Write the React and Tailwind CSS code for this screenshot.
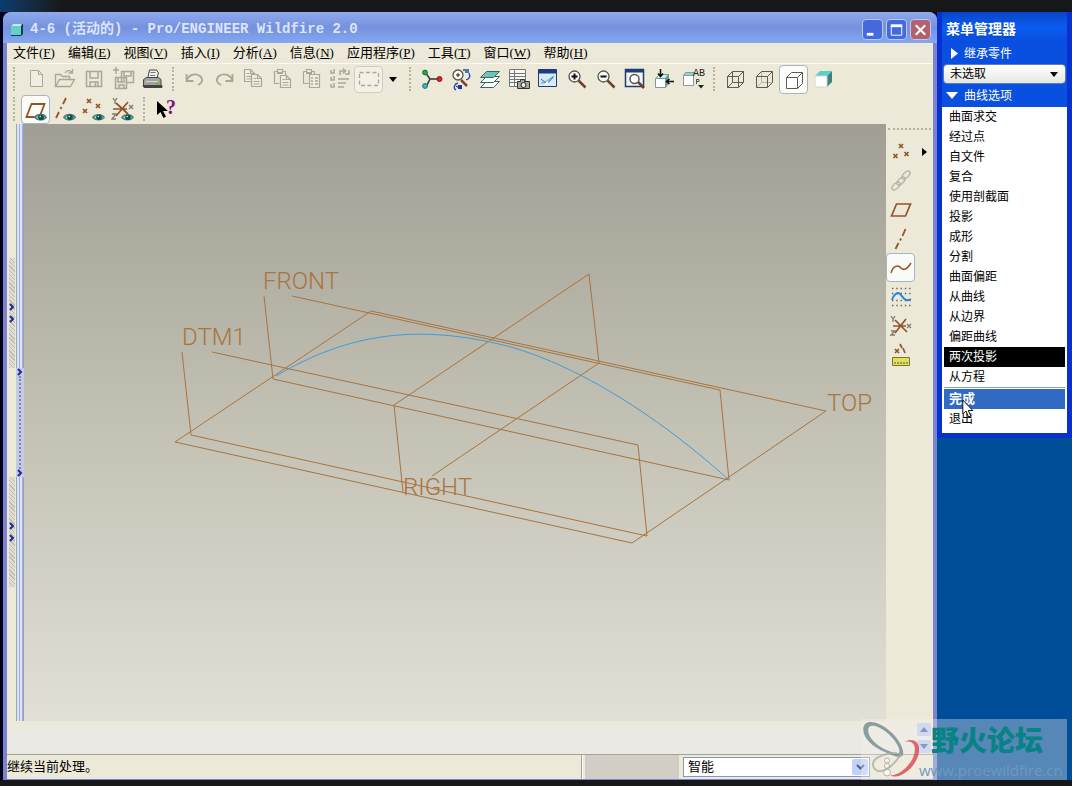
import { useState } from 'react'
import clsx from 'clsx'

const menus = [
  ['文件', 'F'], ['编辑', 'E'], ['视图', 'V'], ['插入', 'I'], ['分析', 'A'],
  ['信息', 'N'], ['应用程序', 'P'], ['工具', 'T'], ['窗口', 'W'], ['帮助', 'H'],
]

const curveOptions = [
  '曲面求交', '经过点', '自文件', '复合', '使用剖截面', '投影', '成形',
  '分割', '曲面偏距', '从曲线', '从边界', '偏距曲线', '两次投影', '从方程',
]

const GRAY = '#a9a798'
const BROWN = '#935428'

function Icon({ children, stroke = GRAY, width = 1 }) {
  return (
    <svg viewBox="0 0 24 24" className="size-6 shrink-0" fill="none" stroke={stroke} strokeWidth={width} aria-hidden="true">
      {children}
    </svg>
  )
}

// small pieces shared by several icons
const Eye = () => (
  <g stroke="none">
    <path d="M11 20.500c2-3.500 9-3.800 11 0c-2.500 3-8.500 3-11 0z" fill="#a7cfc6" stroke="#53837b" />
    <circle cx="17" cy="20.200" r="2.800" fill="#0d5148" />
    <circle cx="16.300" cy="19.500" r=".8" fill="#d9efe9" />
  </g>
)
const Cross = ({ x, y, s = 2 }) => <path d={`M${x - s} ${y - s}l${2 * s} ${2 * s}M${x + s} ${y - s}l${-2 * s} ${2 * s}`} />
const Page = ({ x, y }) => (
  <g>
    <path d={`M${x + .5} ${y + .5}h6l4 4v8h-10z`} fill="#efedde" />
    <path d={`M${x + 6.5} ${y + .5}v4h4M${x + 2.5} ${y + 4.5}h3M${x + 2.5} ${y + 7.5}h6M${x + 2.5} ${y + 10}h6`} />
  </g>
)
const Clip = () => (
  <g>
    <path d="M4.500 4.500h3v-2h5v2h3v4M4.500 4.500v12h5" />
    <path d="M7 6h6" strokeWidth="2" />
  </g>
)
const Lens = ({ children }) => (
  <g>
    <path d="M13.500 13.500l7 7" stroke="#70402e" strokeWidth="2.500" />
    <circle cx="9.500" cy="9.500" r="5.500" fill="#f8f8f4" stroke="#555" strokeWidth="1.300" />
    <g stroke="#111" strokeWidth="2">{children}</g>
  </g>
)

const icons = {
  newFile: <Icon><path d="M6.500 3.500h8l4 4v12h-12zM14.500 3.500v4h4" fill="#f0eee0" /></Icon>,
  open: <Icon><path d="M2.500 19.500v-12h5l2 2h7v3M2.500 19.500l4-7h15l-4 7zM12 6c2-3 5-3 7-1M19.500 2v4h-4" strokeWidth="1.300" /></Icon>,
  save: <Icon width={1.5}><path d="M4.500 4.500h15v15h-15zM8 5v6h8v-6M8 19v-4h8v4M13.500 15v4" /></Icon>,
  backup: <Icon width={1.5}><path d="M10.500 4.500h12v11h-12zM13 5v4h7v-4" /><path d="M4.500 10.500h11v11h-11zM7 11v4h6v-4M8 21v-3h5v3" fill="#e5e2d3" /><path d="M2 3h6M5 0v7" /></Icon>,
  print: (
    <Icon stroke="#444">
      <path d="M7.500 12l2-9h7l2 3-2 6" fill="#eee" />
      <path d="M10.500 5.500h5M10 8.500h5" stroke="#777" />
      <path d="M3.500 12.500l3-2h12l2.500 2v6h-17.500z" fill="#a2a29b" />
      <path d="M3 18.500h19v2h-18z" fill="#444" />
      <path d="M6 14.500h12" stroke="#d8d8d0" />
      <path d="M16 16.500h3" stroke="#71b92f" strokeWidth="2" />
    </Icon>
  ),
  undo: <Icon width={1.8}><path d="M3.500 7v7h7M4 13c2-6 9-7 13-4c4 4 2 7-2 9" /></Icon>,
  redo: <Icon width={1.8}><path d="M20.500 7v7h-7M20 13c-2-6-9-7-13-4c-4 4-2 7 2 9" /></Icon>,
  copy: <Icon width={1.2}><Page x={3} y={2} /><Page x={10} y={7} /></Icon>,
  paste: <Icon width={1.2}><Clip /><Page x={10} y={8} /></Icon>,
  pasteSpecial: <Icon width={1.2}><Clip /><path d="M10.500 7.500h10v13h-10z" fill="#efedde" /><path d="M12 11h2M16 11h3M12 14h2M16 14h3M12 17h2M16 17h3" strokeWidth="1.500" /></Icon>,
  regenerate: <Icon width={1.500}><path d="M3 3v3h3V2M3 10v3h3V9M3 17v3h3v-4M10 12h11M10 16h8M10 20h6M12 8V4h5M15 1.500L17.500 4L15 6.500M21 3v4h-4" /></Icon>,
  select: <Icon width={1.300}><path d="M2.500 5.500h19v13h-19z" strokeDasharray="4 2.500" /></Icon>,
  spin: (
    <Icon stroke="#333" width={1.500}>
      <path d="M5 5l5 7l-4 8M10 12h9" />
      <circle cx="5" cy="5.500" r="2.400" fill="#27a73a" stroke="#11722a" strokeWidth="1" />
      <circle cx="5" cy="19" r="2.400" fill="#39c0ba" stroke="#117777" strokeWidth="1" />
      <circle cx="19.500" cy="12" r="2.500" fill="#d62525" stroke="#8c1717" strokeWidth="1" />
    </Icon>
  ),
  reorient: (
    <Icon stroke="#555">
      <path d="M12 13l6 6" stroke="#80442b" strokeWidth="2.500" />
      <circle cx="9" cy="8" r="5" fill="#fbf8e6" strokeWidth="1.300" />
      <path d="M7 8h4M9 6v4" stroke="#222" />
      <path d="M14 3h6M16 5h4M20 6c2 4 0 6-3 7M9 16c-4 1-5 5-2 7M7 19l5 3" stroke="#2b46a7" strokeWidth="1.300" />
      <path d="M9 18h4v4h-4z" fill="#27309a" stroke="none" />
    </Icon>
  ),
  layers: (
    <Icon stroke="#39675f">
      <path d="M2.500 20.500l6-6h13l-6 6z" fill="#fff" />
      <path d="M2.500 15.500l6-6h13l-6 6z" fill="#fff" />
      <path d="M2.500 10.500l6-6h13l-6 6z" fill="#6fc4b9" />
    </Icon>
  ),
  viewManager: (
    <Icon stroke="#777">
      <path d="M2.500 2.500h16v17h-16z" fill="#f8f8f2" />
      <path d="M2.500 6.500h16M2.500 9.500h16M2.500 12.500h16M2.500 15.500h16M7.500 2.500v17" />
      <path d="M10.500 14.500h3v-2h4v2h5v7h-12z" fill="#aaa89a" stroke="#333" />
      <circle cx="16.500" cy="18" r="2.500" fill="#eee" stroke="#222" />
    </Icon>
  ),
  repaint: (
    <Icon stroke="#203a7a">
      <path d="M2.500 2.500h18v17h-18z" fill="#d5ecf7" />
      <path d="M2.500 4.500h18" strokeWidth="4" stroke="#1e3c82" />
      <path d="M5 16c5 0 8-3 13-7" stroke="#8fc3e3" strokeWidth="2" />
      <path d="M5 12l6 5l6-7" stroke="#2d609b" />
      <path d="M9 18l3-3" stroke="#fff" strokeWidth="2" />
    </Icon>
  ),
  zoomIn: <Icon><Lens><path d="M6.500 9.500h6M9.500 6.500v6" /></Lens></Icon>,
  zoomOut: <Icon><Lens><path d="M6.500 9.500h6" /></Lens></Icon>,
  refit: (
    <Icon stroke="#203a7a" width={1.500}>
      <path d="M2.500 2.500h18v17h-18z" fill="#f5f4ec" />
      <path d="M2.500 4h18" strokeWidth="3" />
      <path d="M15 15l6 6" stroke="#70402e" strokeWidth="2.500" />
      <circle cx="11.500" cy="12" r="4.500" fill="#fff" stroke="#555" />
    </Icon>
  ),
  orient: (
    <Icon stroke="#7a9c98">
      <path d="M3.500 11.500l4-4h9l-3 4z" fill="#caf0ec" />
      <path d="M3.500 11.500h10v9h-10z" fill="#fff" />
      <path d="M13.500 11.500l3-4v9l-3 4z" fill="#4ba49c" />
      <path d="M8.500 2v7M6 6.500l2.500 3l2.500-3M22 14.500h-7M17.500 12l-3 2.500l3 2.500" stroke="#111" strokeWidth="1.500" />
    </Icon>
  ),
  savedViews: (
    <Icon stroke="#8a9a98">
      <path d="M2.500 8.500l2-3h9l-1 3z" fill="#8fd8d1" />
      <path d="M2.500 8.500h10v10h-10z" fill="#fff" />
      <text x="12" y="9" fontSize="10" fill="#222" stroke="none" className="font-['Liberation_Mono',monospace]">AB</text>
      <path d="M15.500 12v5M15.500 12.500h2.500v2h-2.500" stroke="#555" />
      <path d="M17 18h6l-3 3.500z" fill="#222" stroke="none" />
    </Icon>
  ),
  wireframe: <Icon stroke="#5d5c54"><path d="M3.500 9.500h11v11h-11zM8.500 4.500h11v11h-11zM3.500 9.500l5-5M14.500 9.500l5-5M14.500 20.500l5-5M3.500 20.500l5-5" /></Icon>,
  hidden: <Icon stroke="#5d5c54"><path d="M8.500 4.500v11h11M3.500 20.500l5-5" stroke="#b5b3a6" /><path d="M3.500 9.500h11v11h-11zM3.500 9.500l5-5h11v11l-5 5M14.500 9.500l5-5" /></Icon>,
  noHidden: <Icon stroke="#5d5c54"><path d="M4.500 10.500h11v11h-11zM4.500 10.500l5-5h11v11l-5 5M15.500 10.500l5-5" fill="#fff" /></Icon>,
  shaded: (
    <Icon stroke="none">
      <path d="M4 9l5-5h12l-5 5z" fill="#5ad2cc" />
      <path d="M16 9l5-5v11l-5 5z" fill="#3d827d" />
      <path d="M4 9h12v11h-12z" fill="#fff" stroke="#cfd8d4" />
    </Icon>
  ),
  planeEye: <Icon stroke={BROWN} width={1.800}><path d="M2.500 20l5-13h13l-5 13z" /><Eye /></Icon>,
  axisEye: <Icon stroke={BROWN} width={1.800}><path d="M3 21l3-6M7.500 12l1-2M10 7l3-6" /><Eye /></Icon>,
  pointEye: <Icon stroke={BROWN} width={1.700}><Cross x={7} y={4} /><Cross x={16} y={9} /><Cross x={3} y={14} /><Eye /></Icon>,
  csysEye: (
    <Icon stroke={BROWN} width={1.700}>
      <path d="M5 6l12 11M17 5L5 19M2 12h14" />
      <g stroke="#7d7c74" strokeWidth="1.300"><path d="M2 1l2 3l2-3M4 4v3M1 17h4l-4 5h4" /><Cross x={20} y={10} /></g>
      <Eye />
    </Icon>
  ),
  help: (
    <Icon stroke="none">
      <path d="M3 4v14l3.500-3l3 6l2.500-1.500l-3-5.500h5z" fill="#000" />
      <text x="12" y="17" fontSize="20" fontWeight="700" fill="#84107f" className="font-['Liberation_Serif',serif]">?</text>
    </Icon>
  ),
  points: <Icon stroke={BROWN} width={1.700}><Cross x={12} y={6} /><Cross x={6.500} y={16} /><Cross x={17.500} y={14} /></Icon>,
  chain: (
    <Icon stroke="#b2b0a5" width={1.300}>
      <ellipse cx="17" cy="6" rx="5" ry="2.600" transform="rotate(-45 17 6)" />
      <ellipse cx="12" cy="12" rx="5" ry="2.600" transform="rotate(-45 12 12)" />
      <ellipse cx="7" cy="17" rx="5" ry="2.600" transform="rotate(-45 7 17)" />
    </Icon>
  ),
  plane: <Icon stroke={BROWN} width={1.700}><path d="M2.500 18l5-12h14l-5 12z" /></Icon>,
  axis: <Icon stroke={BROWN} width={1.800}><path d="M6.500 22l3-6M11 13.500l1-2M13.500 9l3-7" /></Icon>,
  curve: <Icon stroke={BROWN} width={1.500}><path d="M2 17c2-7 7-9 10-5c3 3 6 1 10-5" /></Icon>,
  sketch: (
    <Icon stroke="#5a5a55" width={1.300}>
      <path d="M3 3.500h19M3 20.500h19M3 8.500h19M3 15.500h19" strokeDasharray="1.300 3" />
      <path d="M3 15c2-6 6-9 9-5c3 4 5 7 10 4" stroke="#2686db" strokeWidth="2" />
    </Icon>
  ),
  csys: (
    <Icon stroke={BROWN} width={1.700}>
      <path d="M6 6l12 12M17 5L6 19M4 12h13" />
      <g stroke="#7d7c74" strokeWidth="1.300"><path d="M2 2l2 3l2-3M4 5v3M2 17h4l-4 4h4" /><Cross x={20} y={12} /></g>
    </Icon>
  ),
  analysis: (
    <Icon stroke={BROWN} width={1.700}>
      <Cross x={8} y={8} /><path d="M11 1l2 4M14 5l2 5" />
      <path d="M3.500 14.500h17v8h-17z" fill="#e3df5b" stroke="#7a762d" strokeWidth="1" />
      <path d="M6 19v2M9 19v2M12 19v2M15 19v2M18 19v2" stroke="#555" strokeWidth="1" />
    </Icon>
  ),
}

function ToolButton({ name, label, active = false, onClick }) {
  return (
    <button
      type="button"
      aria-label={label}
      onClick={onClick}
      className={clsx(
        'flex h-[29px] w-[29px] shrink-0 items-center justify-center rounded-sm border',
        active ? 'border-[#a7b5bd] bg-[#fbfbf8]' : 'border-transparent',
      )}
    >
      {icons[name]}
    </button>
  )
}

const Grip = () => <span className="mx-[6px] h-6 shrink-0 border-l-2 border-dotted border-[#b5b3a4]" />

function Tools({ items }) {
  return items.map(([name, label, active]) => <ToolButton key={name} name={name} label={label} active={active} />)
}

function WindowButton({ label, className, children }) {
  return (
    <button type="button" aria-label={label} className={clsx('flex size-[21px] items-center justify-center rounded-sm border border-[#b9c8f4]', className)}>
      <svg viewBox="0 0 20 20" className="size-5" fill="none" stroke="#fff" aria-hidden="true">{children}</svg>
    </button>
  )
}

function TitleBar() {
  return (
    <header className="flex h-[31px] shrink-0 items-center gap-[6px] rounded-t-lg bg-linear-to-b from-[#8fa9ee] via-[#7691dd] to-[#83a8f1] pt-1 pr-[6px] pl-[7px]">
      <svg viewBox="0 0 14 14" className="size-[14px] shrink-0" aria-hidden="true">
        <path d="M1 3l2-2h10v10l-2 2H1z" fill="#123c46" />
        <path d="M1 3h10v9H1z" fill="#63d0cb" />
        <path d="M1 3l2-2h9l-1 2z" fill="#b5f2ed" />
      </svg>
      <h1 className="flex-1 whitespace-pre font-['Liberation_Mono','Noto_Sans_CJK_SC',monospace] text-[14px] font-bold text-[#dbe5fb]">
        4-6 (活动的) - Pro/ENGINEER Wildfire 2.0
      </h1>
      <div className="flex gap-[3px]">
        <WindowButton label="最小化" className="bg-[#446ade]"><path d="M4 14.500h7" strokeWidth="3" /></WindowButton>
        <WindowButton label="最大化" className="bg-[#446ade]"><path d="M4.500 5v10.500h11V5" /><path d="M4 5.500h12" strokeWidth="3" /></WindowButton>
        <WindowButton label="关闭" className="bg-[#b4606f]"><path d="M5 5l10 10M15 5L5 15" strokeWidth="2.200" /></WindowButton>
      </div>
    </header>
  )
}

function MenuBar() {
  return (
    <nav className="flex h-[21px] shrink-0 items-center gap-[13px] border-b border-[#fbfaf3] px-[6px] text-[13px]">
      {menus.map(([name, key]) => (
        <button key={key} type="button" className="shrink-0 whitespace-nowrap leading-5">
          {name}(<u>{key}</u>)
        </button>
      ))}
    </nav>
  )
}

function Toolbars() {
  return (
    <div className="flex shrink-0 flex-col">
      <div className="flex h-[30px] items-center overflow-hidden">
        <Grip />
        <Tools items={[['newFile', '新建'], ['open', '打开'], ['save', '保存'], ['backup', '备份'], ['print', '打印']]} />
        <Grip />
        <Tools items={[['undo', '撤消'], ['redo', '重做'], ['copy', '复制'], ['paste', '粘贴'], ['pasteSpecial', '选择性粘贴'], ['regenerate', '再生']]} />
        <button type="button" aria-label="选取框" className="flex h-[27px] w-[29px] shrink-0 items-center justify-center rounded-sm border border-[#cfcdc0] bg-[#f3f1e7]">
          {icons.select}
        </button>
        <button type="button" aria-label="选取选项" className="flex h-6 w-5 shrink-0 items-center justify-center">
          <svg viewBox="0 0 8 5" className="h-[5px] w-2" aria-hidden="true"><path d="M0 0h8L4 5z" /></svg>
        </button>
        <Grip />
        <Tools
          items={[
            ['spin', '旋转中心'], ['reorient', '定向模式'], ['layers', '层'], ['viewManager', '视图管理器'], ['repaint', '重画'],
            ['zoomIn', '放大'], ['zoomOut', '缩小'], ['refit', '重新调整'], ['orient', '重定向'], ['savedViews', '保存的视图'],
          ]}
        />
        <Grip />
        <Tools items={[['wireframe', '线框'], ['hidden', '隐藏线'], ['noHidden', '无隐藏线', true], ['shaded', '着色']]} />
      </div>
      <div className="flex h-[30px] items-center">
        <Grip />
        <Tools items={[['planeEye', '基准平面开/关', true], ['axisEye', '基准轴开/关'], ['pointEye', '基准点开/关'], ['csysEye', '坐标系开/关']]} />
        <Grip />
        <ToolButton name="help" label="上下文帮助" />
      </div>
    </div>
  )
}

function Chevron() {
  return (
    <svg viewBox="0 0 6 8" className="h-2 w-[6px]" fill="none" stroke="#1c2a9c" strokeWidth="2" aria-hidden="true">
      <path d="M1 1l3 3l-3 3" />
    </svg>
  )
}

function SashHandle() {
  return (
    <div className="flex h-[110px] w-[6px] flex-col items-center justify-center gap-1 bg-[repeating-linear-gradient(45deg,#bfbdb0_0_1px,#dfddd0_1px_3px)]">
      <Chevron />
      <Chevron />
    </div>
  )
}

function LeftSash() {
  return (
    <div className="flex shrink-0">
      <div className="flex w-[9px] flex-col items-center justify-center gap-[109px]">
        <SashHandle />
        <SashHandle />
      </div>
      <div className="flex w-2 flex-col">
        <div className="flex-1 border-x border-[#8ea3cf] bg-[repeating-linear-gradient(90deg,#dfe5f1_0_2px,#9db0da_2px_3px)]" />
        <div className="flex h-[109px] flex-col items-center justify-between bg-[#c3cbe6]">
          <Chevron />
          <span className="flex-1 border-l-2 border-dotted border-[#7f86a5]" />
          <Chevron />
        </div>
        <div className="flex-1 border-x border-[#8ea3cf] bg-[repeating-linear-gradient(90deg,#dfe5f1_0_2px,#9db0da_2px_3px)]" />
      </div>
    </div>
  )
}

function Viewport() {
  return (
    <main className="flex min-w-0 flex-1 bg-linear-to-b from-[#a19f93] via-[#c2c1b4] to-[#e2e0d5]">
      <svg viewBox="24 124 862 597" className="w-full" role="img" aria-label="FRONT DTM1 TOP RIGHT">
        <g fill="none" stroke="#a8743f">
          <path d="M175 442L371 311L826 411L632 543Z" />
          <path d="M264 296L273 379L729 480L720 390L292 296" />
          <path d="M182 352L191 435L647 536L638 445L212 352" />
          <path d="M432 476L599 363L589 274L394 405L403 492" />
        </g>
        <path d="M276 376C350 332 420 324 507 346C560 360 640 400 729 480" fill="none" stroke="#3f9bdc" />
        <g fill="#a8743f" className="font-['Roboto',sans-serif] text-[24px] font-light">
          <text x="263" y="289">FRONT</text>
          <text x="182" y="345">DTM1</text>
          <text x="827" y="411">TOP</text>
          <text x="403" y="495">RIGHT</text>
        </g>
      </svg>
    </main>
  )
}

function FeatureBar() {
  return (
    <aside className="w-[47px] shrink-0 pt-1">
      <div className="mx-[2px] mb-[7px] border-t-2 border-dotted border-[#b5b3a4]" />
      <div className="flex items-center">
        <ToolButton name="points" label="基准点" />
        <button type="button" aria-label="更多基准点" className="flex h-6 flex-1 items-center justify-center">
          <svg viewBox="0 0 5 8" className="h-2 w-[5px]" aria-hidden="true"><path d="M0 0v8l5-4z" /></svg>
        </button>
      </div>
      <Tools
        items={[
          ['chain', '链'], ['plane', '基准平面'], ['axis', '基准轴'], ['curve', '基准曲线', true],
          ['sketch', '草绘'], ['csys', '坐标系'], ['analysis', '分析特征'],
        ]}
      />
    </aside>
  )
}

function StatusBar() {
  return (
    <footer className="flex h-[25px] shrink-0 items-center border-t border-[#a5a395] text-[13px]">
      <p className="flex-1 leading-5">继续当前处理。</p>
      <div className="h-full w-[2px] border-l border-[#a5a395] bg-white" />
      <div className="ml-[2px] h-full w-[94px] bg-[#d2cec5]" />
      <div className="relative mx-1 w-[187px]">
        <select aria-label="选取过滤器" className="h-5 w-full appearance-none border border-[#7f9db9] bg-white pl-1 leading-4">
          <option>智能</option>
        </select>
        <span className="pointer-events-none absolute inset-y-[2px] right-[2px] flex w-4 items-center justify-center rounded-xs bg-[#c1d1fa]">
          <svg viewBox="0 0 9 6" className="h-[6px] w-[9px]" fill="none" stroke="#4d6185" strokeWidth="2" aria-hidden="true"><path d="M1 1l3.500 3.500L8 1" /></svg>
        </span>
      </div>
      <div className="flex w-[59px] justify-start pl-2">
        <svg viewBox="0 0 10 20" className="h-5 w-[10px]" fill="#fafaf5" stroke="#8d8b80" aria-hidden="true">
          <circle cx="5" cy="3.500" r="2.500" /><circle cx="5" cy="9" r="2.500" /><circle cx="5" cy="15.500" r="3.500" />
        </svg>
      </div>
    </footer>
  )
}

function ScrollArrow({ label, d }) {
  return (
    <button type="button" aria-label={label} className="flex h-[13px] w-[14px] items-center justify-center rounded-xs bg-[#bccbf5]">
      <svg viewBox="0 0 8 5" className="h-[5px] w-2" fill="#4f66a6" aria-hidden="true"><path d={d} /></svg>
    </button>
  )
}

function MenuManager() {
  const [picked, setPicked] = useState('两次投影')

  return (
    <aside className="border-x-[5px] border-b-[5px] border-[#0831d0] bg-[#0a50e0] text-[12px] text-white">
      <h2 className="flex h-[31px] items-center bg-linear-to-b from-[#0a45c8] via-[#0a5cf0] to-[#0a4ddd] pt-1 pl-1 text-[14px] font-bold text-shadow-sm">菜单管理器</h2>
      <button type="button" className="flex h-[21px] w-full items-center pl-[9px] text-left">
        <svg viewBox="0 0 7 11" className="mr-[6px] h-[11px] w-[7px]" fill="#fff" aria-hidden="true"><path d="M0 0v11l7-5.500z" /></svg>
        继承零件
      </button>
      <div className="relative mx-px">
        <select aria-label="继承零件" className="block h-5 w-full appearance-none rounded-sm border border-[#5d7fae] bg-linear-to-b from-white to-[#e6e6e4] pl-[6px] text-black">
          <option>未选取</option>
        </select>
        <svg viewBox="0 0 8 5" className="pointer-events-none absolute top-2 right-2 h-[5px] w-2" aria-hidden="true"><path d="M0 0h8L4 5z" /></svg>
      </div>
      <button type="button" className="flex h-[23px] w-full items-center pl-1 text-left">
        <svg viewBox="0 0 12 7" className="mr-[6px] h-[7px] w-3" fill="#fff" aria-hidden="true"><path d="M0 0h12L6 7z" /></svg>
        曲线选项
      </button>
      <div className="flex flex-col bg-white px-[2px] pb-1 text-black">
        {curveOptions.map((name) => (
          <button
            key={name}
            type="button"
            onClick={() => setPicked(name)}
            className={clsx('h-5 pl-[5px] text-left leading-5', name === picked && 'bg-black text-white')}
          >
            {name}
          </button>
        ))}
        <div className="mb-px border-t border-[#8a9fc4]" />
        <button type="button" className="relative h-5 bg-[#316ac5] pl-[5px] text-left text-[13px] font-bold leading-5 text-white">
          完成
          <svg viewBox="0 0 12 19" className="absolute top-[10px] left-[18px] z-10 h-[19px] w-3" fill="#fff" stroke="#111" aria-hidden="true">
            <path d="M.8 1v14l3.200-3l2.500 6l2.300-1l-2.500-5.500h4.500z" />
          </svg>
        </button>
        <button type="button" className="h-5 pl-[5px] text-left leading-5">退出</button>
      </div>
    </aside>
  )
}

function Watermark() {
  return (
    <div className="pointer-events-none absolute right-[5px] bottom-[6px] flex w-[206px] bg-[#f5f4ee]/35">
      <svg viewBox="0 0 58 61" className="w-[58px] shrink-0" fill="none" aria-hidden="true">
        <path fillRule="evenodd" fill="#5f7d84" fillOpacity=".7" d="M4 5C14-3 39 16 42 32C44 43 31 36 24 33C8 27-2 14 4 5ZM8 8C4 15 14 27 28 32C39 37 40 34 37 27C31 15 14 3 8 8Z" />
        <path d="M36 34C22 34 8 40 13 49c5 7 17 2 27-14" stroke="#a9b1a5" strokeWidth="2" strokeOpacity=".8" />
        <path fillRule="evenodd" fill="#dc3945" fillOpacity=".75" d="M43 23C54 17 61 25 57 37C53 50 37 62 29 56C34 58 49 49 53 36C56 25 51 21 43 23Z" />
      </svg>
      <div className="flex flex-col">
        <span className="pl-3 font-['Noto_Sans_CJK_SC',sans-serif] text-[28px] leading-[41px] font-black whitespace-nowrap text-[#078285]">野火论坛</span>
        <span className="font-['Open_Sans',sans-serif] text-[15px] leading-5 text-[#6d99bd]">www.proewildfire.cn</span>
      </div>
    </div>
  )
}

export default function App() {
  return (
    <div className="relative flex min-h-screen flex-col bg-[#161718] font-['Liberation_Serif','Noto_Sans_CJK_SC',sans-serif] text-black">
      <div className="h-3 shrink-0 bg-linear-to-r from-[#073d6e] via-[#161718] via-6% to-[#161718]" />
      <div className="flex flex-1 bg-[#02021c] pl-[3px]">
        <div className="flex min-w-0 flex-1 flex-col rounded-t-lg bg-[#7b83cf]">
          <TitleBar />
          <div className="mx-1 mb-px flex flex-1 flex-col bg-[#ece9d8]">
            <MenuBar />
            <Toolbars />
            <div className="flex flex-1">
              <LeftSash />
              <Viewport />
              <FeatureBar />
            </div>
            <div className="flex h-[33px] shrink-0 flex-col items-end justify-center gap-1 bg-linear-to-b from-[#ece9d8] to-[#eae9e3] to-40% pr-[2px]">
              <ScrollArrow label="向上滚动" d="M0 5h8L4 0z" />
              <ScrollArrow label="向下滚动" d="M0 0h8L4 5z" />
            </div>
            <StatusBar />
          </div>
        </div>
        <div className="w-[135px] shrink-0 bg-[#004e98]">
          <MenuManager />
        </div>
      </div>
      <div className="h-[6px] shrink-0" />
      <Watermark />
    </div>
  )
}
